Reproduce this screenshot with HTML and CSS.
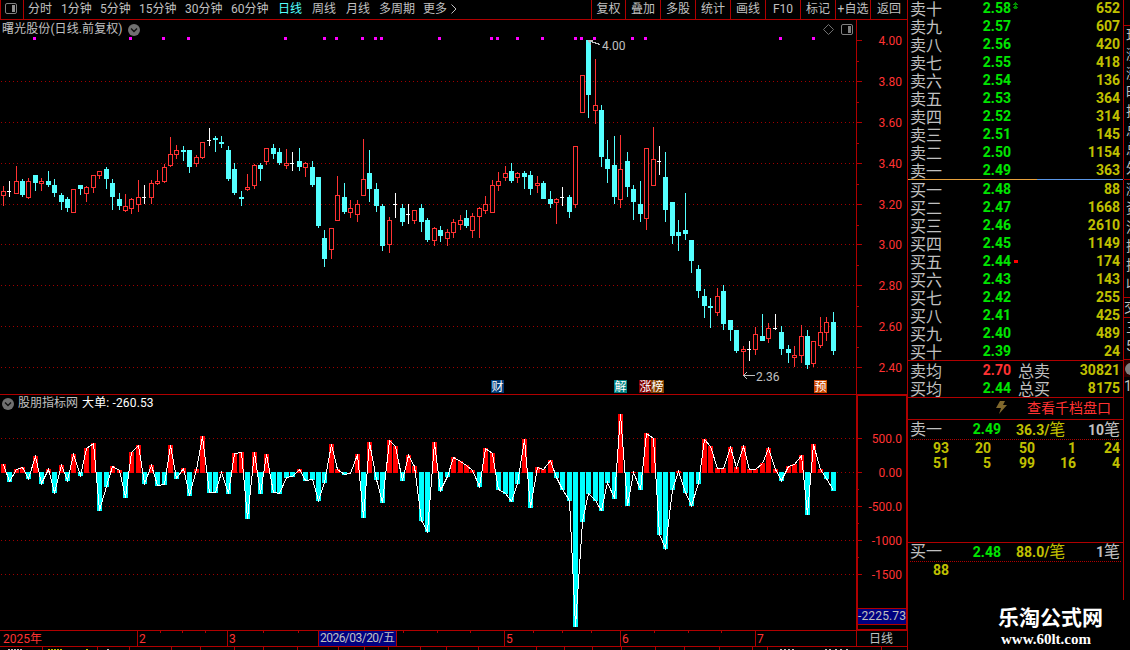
FILE: index.html
```html
<!DOCTYPE html>
<html lang="zh-CN">
<head>
    <meta charset="UTF-8">
    <title>曙光股份 日线</title>
    <link rel="stylesheet" href="styles.css">
</head>
<body>
    <div class="app">
        <div class="main">
            <div class="toolbar">
                <div class="tool-icon">
                    <svg width="12" height="11" viewBox="0 0 12 11"><rect x="0.5" y="0.5" width="11" height="10" rx="1.5" fill="none" stroke="#808080"/><rect x="7" y="2" width="3" height="7" fill="#909090"/></svg>
                </div>
                <div class="periods">
                    <span>分时</span><span>1分钟</span><span>5分钟</span><span>15分钟</span><span>30分钟</span><span>60分钟</span><span class="active">日线</span><span>周线</span><span>月线</span><span>多周期</span><span class="more">更多<svg width="6" height="10" viewBox="0 0 6 10"><path d="M0.5 0.5L5 5L0.5 9.5" fill="none" stroke="#c0c0c0"/></svg></span>
                </div>
                <div class="tools">
                    <span>复权</span><span>叠加</span><span>多股</span><span>统计</span><span>画线</span><span>F10</span><span>标记</span><span>+自选</span><span>返回</span>
                </div>
            </div>

            <div class="panel price-panel">
                <svg id="price" width="907" height="374" viewBox="0 20 907 374"></svg>
                <div class="panel-title">
                    <span>曙光股份(日线.前复权)</span>
                    <svg class="drop" width="12" height="12" viewBox="0 0 12 12"><circle cx="6" cy="6" r="6"/><path d="M3 4.5L6 7.5L9 4.5"/></svg>
                </div>
                <div class="panel-tools">
                    <svg width="11" height="11" viewBox="0 0 11 11"><path d="M5.5 0.5L10.5 5.5L5.5 10.5L0.5 5.5Z" fill="none" stroke="#707070"/></svg>
                    <svg width="12" height="11" viewBox="0 0 12 11"><rect x="0.5" y="0.5" width="11" height="10" rx="1.5" fill="none" stroke="#808080"/><rect x="7" y="2" width="3" height="7" fill="#808080"/></svg>
                </div>
            </div>

            <div class="panel volume-panel">
                <svg id="volume" width="907" height="235" viewBox="0 395 907 235"></svg>
                <div class="panel-title">
                    <svg class="drop" width="12" height="12" viewBox="0 0 12 12"><circle cx="6" cy="6" r="6"/><path d="M3 4.5L6 7.5L9 4.5"/></svg>
                    <span>股朋指标网</span>
                    <span class="value">大单: -260.53</span>
                </div>
            </div>

            <svg id="timeline" width="907" height="20" viewBox="0 630 907 20"></svg>
        </div>

        <div class="book">
            <div class="levels" id="sell"></div>
            <div class="ratio"><i></i></div>
            <div class="levels buy" id="buy"></div>
            <div class="summary">
                <div class="row"><span>卖均</span><b class="red">2.70</b><span class="total">总卖</span><b class="qty">30821</b></div>
                <div class="row"><span>买均</span><b>2.44</b><span class="total">总买</span><b class="qty">8175</b></div>
            </div>
            <div class="link">
                <svg width="11" height="13" viewBox="0 0 11 13"><path d="M4 0H9L7 4H11L3 13L5 7H0Z" fill="#80682c"/></svg>
                <span>查看千档盘口</span>
            </div>
            <div class="queue sell-queue">
                <div class="queue-head"><span>卖一</span><b>2.49</b><em>36.3/<i>笔</i></em><strong>10<i>笔</i></strong></div>
                <div class="orders"><b>93</b><b>20</b><b>50</b><b>1</b><b>24</b><b>51</b><b>5</b><b>99</b><b>16</b><b>4</b></div>
            </div>
            <div class="queue buy-queue">
                <div class="queue-head"><span>买一</span><b>2.48</b><em>88.0/<i>笔</i></em><strong>1<i>笔</i></strong></div>
                <div class="orders"><b>88</b></div>
            </div>
            <div class="brand">
                <div class="brand-name">乐淘公式网</div>
                <div class="brand-url">www.60lt.com</div>
            </div>
        </div>

        <div class="side">
            <div class="side-box quote"><span>现</span><span>涨</span><span>涨</span><span>昨</span><span>振</span><span>总</span><span>总</span><span>外</span></div>
            <div class="side-box flow"><span>涨</span><span>资</span><span>流</span><span>换</span><span>换</span><span>收</span></div>
            <div class="side-box single"><span>交</span></div>
            <div class="side-box last"><span>三</span><span>5</span></div>
            <div class="side-box mark"><i></i></div>
            <div class="side-box count"><span>1</span></div>
        </div>
    </div>
    <script src="chart.js"></script>
</body>
</html>
```
FILE: styles.css
```css
* {
    box-sizing: border-box;
}
body {
    margin: 0;
    background: #000;
    color: #c0c0c0;
    font-family: Roboto, "Noto Sans CJK SC", sans-serif;
    font-size: 12px;
    overflow: hidden;
}
svg {
    display: block;
    flex: none;
}
i, em {
    font-style: normal;
}
.app {
    display: grid;
    grid-template-columns: 907px 217px 6px;
    width: 1130px;
    height: 650px;
}
.main {
    display: flex;
    flex-direction: column;
}

/* toolbar */
.toolbar {
    display: flex;
    height: 20px;
    line-height: 19px;
    border-bottom: 1px solid #b00000;
    white-space: nowrap;
}
.tool-icon {
    width: 24px;
    padding: 3px 0 0 4px;
    border-left: 1px solid #b00000;
    border-right: 1px solid #b00000;
}
.periods {
    display: grid;
    grid-template-columns: 33px 39px 39px 46px 46px 47px 34px 34px 33px 44px 40px;
    padding-left: 4px;
    width: 567px;
}
.periods .active {
    color: #54ffff;
}
.more svg {
    display: inline-block;
    margin-left: 4px;
    vertical-align: -1px;
}
.tools {
    display: grid;
    grid-template-columns: 34px repeat(7, 35px) 37px;
}
.tools span {
    border-left: 1px solid #b00000;
    text-align: center;
}

/* chart panels */
.panel {
    position: relative;
    border-bottom: 1px solid #b00000;
}
.price-panel {
    height: 375px;
}
.volume-panel {
    height: 235px;
    border-bottom: 0;
}
.panel-title {
    position: absolute;
    left: 2px;
    top: 1px;
    display: flex;
    align-items: center;
    gap: 5px;
    height: 17px;
    line-height: 17px;
    letter-spacing: 0.1px;
}
.volume-panel .panel-title {
    top: 0;
    gap: 4px;
    letter-spacing: 0;
}
.volume-panel .value {
    color: #fff;
    letter-spacing: 0.15px;
}
.drop circle {
    fill: #707070;
}
.drop path {
    fill: none;
    stroke: #101010;
    stroke-width: 1.4;
}
.panel-tools {
    position: absolute;
    left: 823px;
    top: 4px;
    display: flex;
    gap: 7px;
}
#price, #volume, #timeline {
    shape-rendering: crispEdges;
}
.axis-label {
    fill: #ff3232;
    text-anchor: end;
}
.note {
    fill: #c0c0c0;
}
.badge {
    fill: #fff;
    text-anchor: middle;
}
.month {
    fill: #ff3232;
}

/* order book */
.book {
    border-left: 1px solid #b00000;
    display: flex;
    flex-direction: column;
}
.levels, .summary, .link, .queue {
    border-right: 1px solid #b00000;
}
.levels {
    height: 179px;
}
.levels.buy {
    height: 180px;
    padding-top: 1px;
}
.row {
    display: grid;
    grid-template-columns: 32px 69px 7px 32px 1fr;
    height: 18px;
    line-height: 19px;
    padding: 0 3px 0 2px;
    font-size: 16px;
    white-space: nowrap;
}
.row b {
    font-size: 14px;
    line-height: 17px;
    color: #00e600;
    text-align: right;
}
.row b.qty {
    color: #c0c000;
    grid-column: 5;
}
.row b.red {
    color: #ff3232;
}
.row .total {
    grid-column: 4;
}
.row .flag {
    padding: 2px 0 0 2px;
}
.ratio {
    height: 1px;
    background: #5a96e6;
    margin-right: 1px;
}
.ratio i {
    display: block;
    width: 129px;
    height: 1px;
    background: #e6a03c;
}
.summary {
    height: 38px;
    border-top: 1px solid #b00000;
    border-bottom: 1px solid #b00000;
    padding-top: 1px;
}
.link {
    height: 21px;
    display: flex;
    align-items: center;
    gap: 20px;
    padding-left: 88px;
    padding-bottom: 2px;
    color: #ff3232;
    font-size: 14px;
    line-height: 18px;
}
.queue {
    border-top: 1px solid #b00000;
}
.sell-queue {
    height: 123px;
}
.buy-queue {
    height: 58px;
}
.queue-head {
    display: grid;
    grid-template-columns: 32px 59px 15px 50px 1fr;
    height: 20px;
    line-height: 19px;
    margin: 0 2px 0 2px;
    padding-right: 1px;
    border-bottom: 1px dotted #b00000;
    font-size: 16px;
    white-space: nowrap;
}
.buy-queue .queue-head {
    height: 19px;
    line-height: 18px;
}
.queue-head b {
    font-size: 14px;
    color: #00e600;
    text-align: right;
}
.queue-head em {
    grid-column: 4;
    color: #c0c000;
    font-size: 14px;
    font-weight: bold;
}
.queue-head strong {
    text-align: right;
    font-size: 14px;
}
.queue-head i {
    font-size: 16px;
    font-weight: normal;
}
.orders {
    display: grid;
    grid-template-columns: 41px 42px 44px 41px 44px;
    grid-auto-rows: 15px;
    line-height: 16px;
    color: #c0c000;
    font-size: 14px;
    text-align: right;
}
.brand {
    color: #fff;
    padding: 7px 0 0 90px;
}
.brand-name {
    font-size: 21px;
    font-weight: bold;
    line-height: 23px;
}
.brand-url {
    font-family: "Liberation Serif", serif;
    font-size: 15px;
    font-weight: bold;
    line-height: 18px;
    padding-left: 3px;
}

/* clipped quote column */
.side {
    overflow: hidden;
    padding-top: 25px;
}
.side-box {
    border-top: 1px solid #b00000;
    padding-left: 2px;
    font-size: 14px;
    line-height: 19px;
    overflow: hidden;
}
.side-box span {
    display: block;
    width: 30px;
}
.quote {
    height: 154px;
}
.flow {
    height: 118px;
}
.single {
    height: 20px;
    padding-left: 0;
}
.last {
    height: 42px;
}
.mark {
    height: 18px;
    background: #280000;
    padding: 3px 0 0 1px;
}
.mark i {
    display: block;
    width: 12px;
    height: 12px;
    border-radius: 6px;
    background: #808080;
}
.count {
    border-top: 0;
    padding-left: 0;
}
```
FILE: chart.js
```js
// type (r = up, c = down, w = flat), high, body top, body bottom, low, order flow
const bars = [
    ['r',186,191,196,206,464], ['w',181,191,192,197,482], ['r',166,181,194,194,469], ['c',179,181,195,197,467],
    ['r',178,181,198,199,479], ['c',175,175,183,191,456], ['r',178,181,184,191,484], ['c',171,181,185,187,469],
    ['c',179,185,193,197,493], ['c',193,195,202,210,465], ['c',197,199,208,212,481], ['r',189,189,213,213,454],
    ['c',185,185,189,195,476], ['r',186,187,194,202,448], ['r',175,175,188,193,443], ['r',171,171,176,179,511],
    ['c',167,169,179,189,487], ['c',179,183,197,210,466], ['c',193,199,206,210,470], ['r',194,206,211,212,498],
    ['r',198,199,209,214,452], ['r',180,197,205,212,445], ['w',185,197,198,204,484], ['r',180,183,198,204,465],
    ['r',170,181,184,185,486], ['r',164,167,182,183,485], ['r',137,154,166,167,445], ['r',145,150,155,159,479],
    ['c',146,150,152,161,468], ['c',150,150,167,173,496], ['r',155,157,164,167,469], ['r',142,142,158,159,436],
    ['w',128,140,141,146,493], ['c',136,138,140,152,493], ['c',136,142,144,148,472], ['c',146,150,179,181,494],
    ['c',163,169,193,195,453], ['c',191,197,199,206,452], ['r',174,187,190,191,519], ['r',164,165,186,189,452],
    ['c',163,165,169,181,494], ['r',148,148,162,165,454], ['c',144,148,154,159,493], ['c',148,152,163,165,494],
    ['r',149,163,166,169,478], ['w',152,163,164,171,477], ['c',148,161,167,171,469], ['r',162,163,168,177,481],
    ['c',161,167,185,187,480], ['c',177,177,226,228,501], ['c',230,238,259,267,483], ['r',228,228,250,259,444],
    ['r',176,195,221,221,469], ['c',183,197,212,214,475], ['r',200,208,213,218,473], ['r',200,204,215,222,454],
    ['r',139,179,196,196,518], ['c',150,173,189,202,442], ['c',183,189,206,212,480], ['c',204,206,246,251,503],
    ['r',217,220,245,253,440], ['w',193,204,205,218,446], ['c',204,208,222,226,481], ['w',204,214,215,224,455],
    ['r',210,210,221,224,466], ['c',204,208,222,232,521], ['c',218,220,240,242,532], ['r',227,228,241,246,442],
    ['c',226,230,236,242,491], ['r',229,232,239,246,477], ['r',219,222,233,238,457], ['r',215,220,225,230,461],
    ['c',210,218,226,228,465], ['r',213,216,231,238,470], ['r',207,208,217,238,487], ['r',196,204,211,214,448],
    ['r',180,185,213,213,453], ['r',172,181,186,191,490], ['r',166,173,178,181,494], ['c',163,171,181,183,502],
    ['r',172,173,178,183,484], ['c',171,173,177,189,439], ['c',171,175,189,195,508], ['r',176,183,186,193,467],
    ['c',181,183,199,199,469], ['c',191,199,204,208,460], ['r',198,199,203,224,478], ['w',187,197,198,206,490],
    ['c',195,197,212,218,501], ['r',146,146,205,208,627], ['r',75,75,113,113,522], ['c',40,40,95,118,494],
    ['r',59,105,111,124,501], ['c',105,110,157,167,511], ['c',140,159,169,183,483], ['c',136,165,197,204,499],
    ['r',135,169,200,208,414], ['c',152,161,187,197,506], ['c',185,189,202,220,472], ['c',181,204,214,222,490],
    ['r',148,148,219,230,433], ['r',127,159,186,186,438], ['w',146,161,162,175,535], ['c',152,177,210,222,549],
    ['c',202,202,236,244,490], ['c',220,232,236,251,471], ['c',193,230,234,240,493], ['c',240,240,261,273,506],
    ['c',265,269,291,298,484], ['c',289,296,306,318,439], ['c',298,306,308,328,446], ['r',288,296,313,316,468],
    ['c',285,291,324,330,468], ['c',320,320,330,341,447], ['c',330,330,351,353,467], ['r',346,349,352,375,446],
    ['w',341,349,350,361,469], ['r',327,334,350,355,469], ['c',314,336,341,341,463], ['r',323,328,339,343,448],
    ['w',314,328,329,330,469], ['c',326,332,349,355,481], ['c',345,349,353,363,466], ['r',346,355,358,367,464],
    ['r',325,336,356,363,455], ['c',330,336,365,369,515], ['r',341,341,364,367,444], ['r',317,332,346,348,469],
    ['r',317,322,333,341,479], ['c',312,322,351,355,491]
];

const colors = { r: '#ff3232', c: '#54ffff', w: '#ffffff' };
const line = '#b00000';

function barX(i) {
    return Math.floor(3.2 + i * 6.434);
}
function rect(x, y, w, h, fill) {
    return `<rect x="${x}" y="${y}" width="${w}" height="${h}" fill="${fill}"/>`;
}
function text(x, y, cls, str) {
    return `<text x="${x}" y="${y}" class="${cls}">${str}</text>`;
}
function gridLine(y) {
    let s = '';
    for (let x = 1; x < 856; x += 4) s += rect(x, y, 1, 1, '#a00000');
    return s;
}

function drawPrice() {
    let s = rect(856, 20, 1, 374, line);
    const ticks = [[40, '4.00'], [81, '3.80'], [122, '3.60'], [163, '3.40'], [204, '3.20'], [244, '3.00'], [285, '2.80'], [326, '2.60'], [367, '2.40']];
    ticks.forEach(([y, label], i) => {
        if (i > 0) s += gridLine(y);
        s += rect(857, y, 5, 1, line) + text(902, y + 5, 'axis-label', label);
        if (i < 8) s += rect(857, y + 21, 2, 1, line);
    });
    [33, 129, 162, 187, 284, 323, 335, 361, 374, 380, 438, 490, 496, 516, 541, 574, 580, 593, 631, 644, 779, 812].forEach(x => {
        s += rect(x, 37, 3, 3, '#ff00ff');
    });
    bars.forEach(([type, high, top, bottom, low], i) => {
        const x = barX(i);
        const c = colors[type];
        if (type === 'r') {
            s += rect(x, high, 1, top - high, c) + rect(x, bottom, 1, low - bottom, c);
            s += `<rect x="${x - 1.5}" y="${top + 0.5}" width="4" height="${bottom - top - 1}" fill="#000" stroke="${c}"/>`;
        } else {
            s += rect(x, high, 1, low - high, c);
            s += type === 'c' ? rect(x - 2, top, 5, bottom - top, c) : rect(x - 2, top, 4, 1, c);
        }
    });
    // highest and lowest price
    s += '<path d="M588 40.5L600 44.5M588.5 40.5H593M588.5 40.5L591 45" fill="none" stroke="#c0c0c0"/>' + text(602, 50, 'note', '4.00');
    s += '<path d="M743 375.5H755M743.5 375.5L747 372M743.5 375.5L747 379" fill="none" stroke="#c0c0c0"/>' + text(756, 381, 'note', '2.36');
    [[491, '#003c78', '财'], [614, '#008080', '解'], [639, '#800000', '涨'], [651, '#804000', '榜'], [814, '#c84600', '预']].forEach(([x, bg, label]) => {
        s += rect(x, 380, 13, 13, bg) + text(x + 6.5, 391, 'badge', label);
    });
    document.getElementById('price').innerHTML = s;
}

function drawVolume() {
    let s = rect(856, 395, 2, 235, line) + rect(906, 395, 1, 235, line) + rect(856, 395, 51, 1, line) + rect(856, 629, 51, 1, line);
    [[438, '500.0'], [472, '0.00'], [506, '-500.0'], [540, '-1000'], [574, '-1500']].forEach(([y, label]) => {
        s += gridLine(y) + rect(857, y, 5, 1, line) + text(902, y + 5, 'axis-label', label);
    });
    [489, 523, 557].forEach(y => { s += rect(857, y, 2, 1, line); });
    let points = '';
    bars.forEach((bar, i) => {
        const x = barX(i);
        const y = bar[5];
        s += y <= 473 ? rect(x - 2, y, 5, 473 - y, '#ff0000') : rect(x - 2, 472, 5, y - 472, '#00ffff');
        points += `${x + 0.5},${y <= 473 ? y + 0.5 : y - 0.5} `;
    });
    s += `<polyline points="${points}" fill="none" stroke="#fff"/>`;
    s += rect(858, 608, 48, 17, line) + rect(858, 609, 48, 15, '#000080');
    s += '<text x="858" y="620" class="note" textLength="48">-2225.73</text>';
    document.getElementById('volume').innerHTML = s;
}

function drawTimeline() {
    let s = rect(0, 630, 907, 1, line) + rect(0, 646, 907, 1, line) + rect(856, 630, 1, 16, line);
    s += rect(318, 631, 79, 15, '#000080');
    [137, 227, 318, 396, 504, 620, 755].forEach(x => { s += rect(x, 631, 1, 15, line); });
    [160, 182, 205, 263, 298, 403, 437, 470, 533, 562, 591, 654, 688, 721].forEach(x => { s += rect(x, 631, 1, 2, line); });
    [42, 97, 129, 171, 200, 234, 263, 297, 338, 364, 388, 420, 446, 478, 536, 564, 592, 621, 655, 684, 719, 752, 767, 881].forEach(x => {
        s += rect(x, 647, 1, 3, line);
    });
    s += text(3, 643, 'month', '2025年') + text(139, 643, 'month', '2') + text(229, 643, 'month', '3');
    s += '<text x="320" y="642" class="note" textLength="75">2026/03/20/五</text>';
    s += text(506, 643, 'month', '5') + text(622, 643, 'month', '6') + text(757, 643, 'month', '7');
    s += text(869, 643, 'note', '日线');
    // top edge of the next row
    [8, 11, 14, 17, 20, 107, 780, 784, 788, 792, 825, 829, 835, 840, 846].forEach(x => { s += rect(x, 649, 2, 1, '#c0c0c0'); });
    [48, 51, 54, 57, 60, 86].forEach(x => { s += rect(x, 649, 2, 1, '#c0c000'); });
    document.getElementById('timeline').innerHTML = s;
}

function drawLevels(id, rows) {
    const flags = {
        up: '<svg width="5" height="7" viewBox="0 0 5 7" shape-rendering="crispEdges"><path d="M2 0H3V1H4V2H5V3H3V4H4V5H5V6H4V7H1V6H0V5H1V4H2V3H0V2H1V1H2Z" fill="#008c00"/></svg>',
        dot: '<svg width="5" height="8" viewBox="0 0 5 8"><rect x="1" y="5" width="4" height="3" fill="#ff0000"/></svg>'
    };
    document.getElementById(id).innerHTML = rows.map(([name, price, qty, flag]) =>
        `<div class="row"><span>${name}</span><b>${price}</b><span class="flag">${flag ? flags[flag] : ''}</span><b class="qty">${qty}</b></div>`
    ).join('');
}

drawPrice();
drawVolume();
drawTimeline();
drawLevels('sell', [
    ['卖十', '2.58', 652, 'up'], ['卖九', '2.57', 607], ['卖八', '2.56', 420], ['卖七', '2.55', 418], ['卖六', '2.54', 136],
    ['卖五', '2.53', 364], ['卖四', '2.52', 314], ['卖三', '2.51', 145], ['卖二', '2.50', 1154], ['卖一', '2.49', 363]
]);
drawLevels('buy', [
    ['买一', '2.48', 88], ['买二', '2.47', 1668], ['买三', '2.46', 2610], ['买四', '2.45', 1149], ['买五', '2.44', 174, 'dot'],
    ['买六', '2.43', 143], ['买七', '2.42', 255], ['买八', '2.41', 425], ['买九', '2.40', 489], ['买十', '2.39', 24]
]);
```
